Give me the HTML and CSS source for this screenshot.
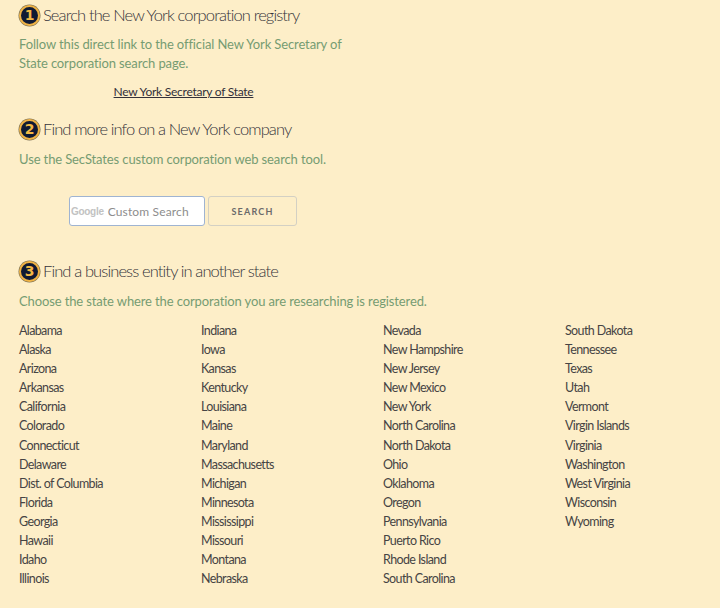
FILE: index.html
```html
<!DOCTYPE html>
<html lang="en">
<head>
<meta charset="utf-8">
<title>New York corporation search</title>
<link rel="stylesheet" href="styles.css">
</head>
<body>
<section class="step step-one">
  <h2 class="step-title"><span class="badge">1</span>Search the New York corporation registry</h2>
  <p class="lead narrow">Follow this direct link to the official New York Secretary of State corporation search page.</p>
  <p class="direct"><a href="#">New York Secretary of State</a></p>
</section>
<section class="step step-two">
  <h2 class="step-title"><span class="badge">2</span>Find more info on a New York company</h2>
  <p class="lead">Use the SecStates custom corporation web search tool.</p>
  <form class="search">
    <div class="search-input"><span class="google">Google</span><span class="placeholder">Custom Search</span></div>
    <button class="search-button" type="button">SEARCH</button>
  </form>
</section>
<section class="step step-three">
  <h2 class="step-title"><span class="badge">3</span>Find a business entity in another state</h2>
  <p class="lead">Choose the state where the corporation you are researching is registered.</p>
  <div class="states">
    <ul>
      <li>Alabama</li><li>Alaska</li><li>Arizona</li><li>Arkansas</li><li>California</li><li>Colorado</li><li>Connecticut</li><li>Delaware</li><li>Dist. of Columbia</li><li>Florida</li><li>Georgia</li><li>Hawaii</li><li>Idaho</li><li>Illinois</li>
    </ul>
    <ul>
      <li>Indiana</li><li>Iowa</li><li>Kansas</li><li>Kentucky</li><li>Louisiana</li><li>Maine</li><li>Maryland</li><li>Massachusetts</li><li>Michigan</li><li>Minnesota</li><li>Mississippi</li><li>Missouri</li><li>Montana</li><li>Nebraska</li>
    </ul>
    <ul>
      <li>Nevada</li><li>New Hampshire</li><li>New Jersey</li><li>New Mexico</li><li>New York</li><li>North Carolina</li><li>North Dakota</li><li>Ohio</li><li>Oklahoma</li><li>Oregon</li><li>Pennsylvania</li><li>Puerto Rico</li><li>Rhode Island</li><li>South Carolina</li>
    </ul>
    <ul>
      <li>South Dakota</li><li>Tennessee</li><li>Texas</li><li>Utah</li><li>Vermont</li><li>Virgin Islands</li><li>Virginia</li><li>Washington</li><li>West Virginia</li><li>Wisconsin</li><li>Wyoming</li>
    </ul>
  </div>
</section>
</body>
</html>
```
FILE: styles.css
```css
* { box-sizing: border-box; }
html, body { height: 100%; }
body {
  margin: 0;
  padding: 4px 0 0 19px;
  background: #fdeec8;
  font-family: Lato, "Open Sans", sans-serif;
  overflow: hidden;
}
.step-title {
  display: flex;
  align-items: center;
  gap: 3px;
  margin: 0;
  height: 22px;
  font-size: 16.5px;
  font-weight: 300;
  letter-spacing: -0.88px;
  color: #35333a;
  white-space: nowrap;
}
.badge {
  flex: none;
  width: 21px;
  height: 21px;
  border-radius: 50%;
  display: flex;
  align-items: center;
  justify-content: center;
  background: #101a33;
  border: 2.5px solid #efb244;
  box-shadow: 0 0 0 0.5px #7d7358;
  color: #f3b945;
  font-family: "DejaVu Sans", sans-serif;
  font-size: 14px;
  font-weight: 700;
  letter-spacing: 0;
  line-height: 1;
}
.lead {
  margin: 0;
  font-size: 13px;
  line-height: 19px;
  letter-spacing: -0.12px;
  color: #769c72;
}
.narrow { width: 330px; }
.step-one .lead { margin-top: 9px; }
.direct {
  margin: 9px 0 0;
  width: 329px;
  text-align: center;
  font-size: 12px;
  line-height: 19px;
  letter-spacing: -0.26px;
}
.direct a { color: #33303a; }
.step-two { margin-top: 17px; }
.step-two .lead { margin-top: 10px; }
.search {
  display: flex;
  gap: 3px;
  margin: 27px 0 0 50px;
}
.search-input {
  width: 136px;
  height: 30px;
  display: flex;
  align-items: center;
  gap: 4px;
  padding-left: 1px;
  background: #fff;
  border: 1px solid #9fb4d2;
  border-radius: 3px;
}
.google {
  font-family: "Liberation Sans", sans-serif;
  font-size: 10px;
  font-weight: 700;
  letter-spacing: -0.3px;
  color: #c2c2c2;
}
.placeholder {
  font-size: 12px;
  letter-spacing: 0.15px;
  color: #8d8d8d;
}
.search-button {
  width: 89px;
  height: 30px;
  padding: 0;
  background: transparent;
  border: 1px solid #d3d0c4;
  border-radius: 3px;
  font-family: Lato, sans-serif;
  font-size: 9px;
  font-weight: 700;
  letter-spacing: 1.2px;
  color: #6a6a6a;
}
.step-three { margin-top: 34px; }
.step-three .lead { margin-top: 10px; }
.states {
  display: grid;
  grid-template-columns: repeat(4, 182px);
  margin-top: 10px;
}
.states ul { margin: 0; padding: 0; list-style: none; }
.states li {
  font-size: 12.5px;
  line-height: 19.1px;
  font-weight: 400;
  letter-spacing: -0.62px;
  color: #464444;
}
```
